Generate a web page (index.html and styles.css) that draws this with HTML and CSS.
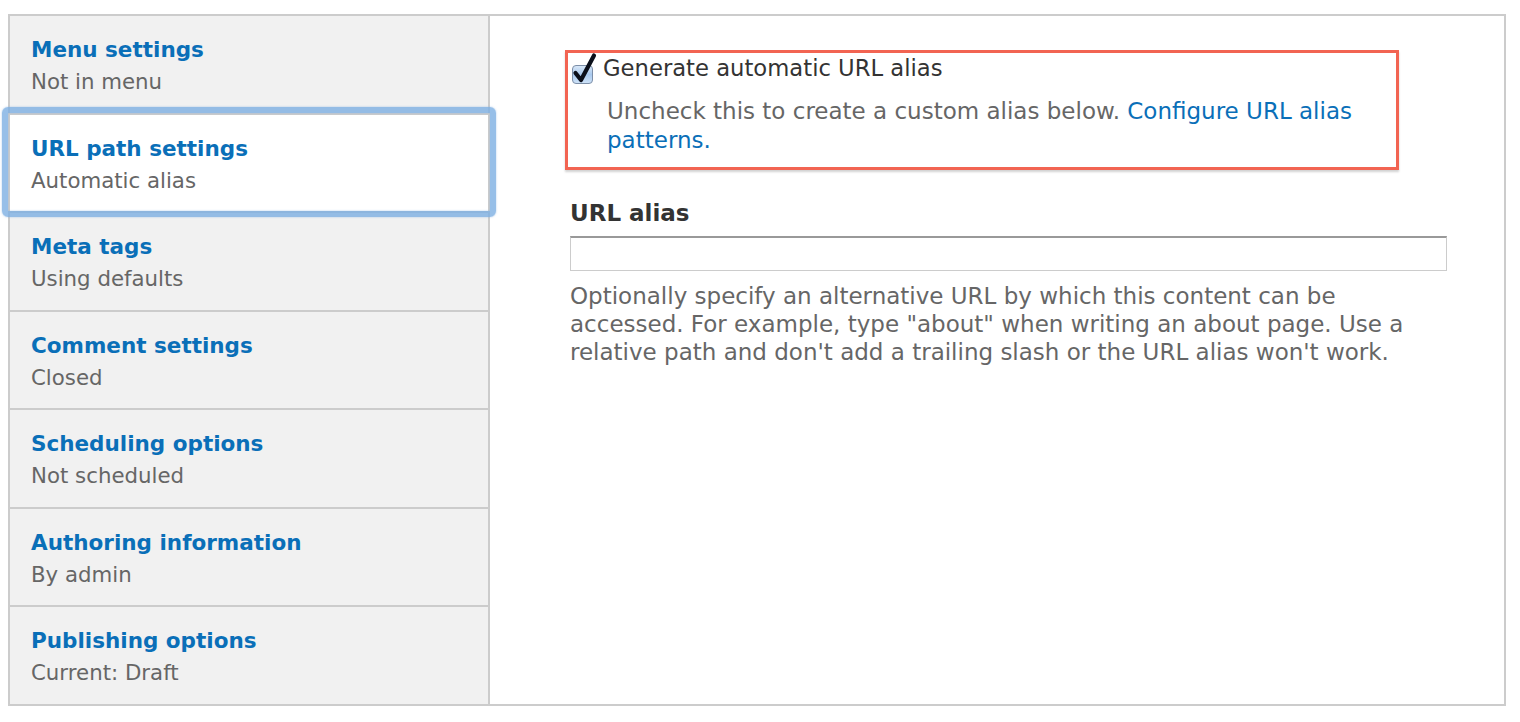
FILE: index.html
```html
<!DOCTYPE html>
<html>
<head>
<meta charset="utf-8">
<link rel="stylesheet" href="styles.css">
</head>
<body>
<div class="page">
  <div class="vtabs">
    <ul class="menu">
      <li class="tab"><a class="tab-title" href="#">Menu settings</a><span class="tab-summary">Not in menu</span></li>
      <li class="tab selected"><a class="tab-title" href="#">URL path settings</a><span class="tab-summary">Automatic alias</span></li>
      <li class="tab"><a class="tab-title" href="#">Meta tags</a><span class="tab-summary">Using defaults</span></li>
      <li class="tab"><a class="tab-title" href="#">Comment settings</a><span class="tab-summary">Closed</span></li>
      <li class="tab"><a class="tab-title" href="#">Scheduling options</a><span class="tab-summary">Not scheduled</span></li>
      <li class="tab"><a class="tab-title" href="#">Authoring information</a><span class="tab-summary">By admin</span></li>
      <li class="tab last"><a class="tab-title" href="#">Publishing options</a><span class="tab-summary">Current: Draft</span></li>
    </ul>
    <div class="pane">
      <div class="highlight">
        <label class="check-row">
          <svg class="checkbox" width="28" height="32" viewBox="0 0 28 32">
            <defs>
              <linearGradient id="cb" x1="0" y1="0" x2="0" y2="1">
                <stop offset="0" stop-color="#dbe9f8"/>
                <stop offset="0.5" stop-color="#a9c9ee"/>
                <stop offset="1" stop-color="#cfe3f8"/>
              </linearGradient>
            </defs>
            <rect x="2.5" y="13.5" width="20" height="18" rx="3.5" fill="url(#cb)" stroke="#7d8fa8"/>
            <path d="M5.5 21 L11 28 L24 3.5" fill="none" stroke="#0b0f1a" stroke-width="4.2" stroke-linecap="round" stroke-linejoin="round"/>
          </svg>
          <span class="check-label">Generate automatic URL alias</span>
        </label>
        <p class="check-desc">Uncheck this to create a custom alias below. <a href="#">Configure URL alias patterns.</a></p>
      </div>
      <label class="field-label" for="alias">URL alias</label>
      <input class="text-input" id="alias" type="text">
      <p class="field-desc">Optionally specify an alternative URL by which this content can be accessed. For example, type "about" when writing an about page. Use a relative path and don't add a trailing slash or the URL alias won't work.</p>
    </div>
  </div>
</div>
</body>
</html>
```
FILE: styles.css
```css
* { box-sizing: border-box; }
html, body { margin: 0; padding: 0; background: #fff; }
body {
  font-family: "DejaVu Sans", "Liberation Sans", sans-serif;
  color: #333;
}
a { color: #0a6fb8; text-decoration: none; }
.page {
  padding: 14px 14px 16px 8px;
}
.vtabs {
  display: flex;
  height: 692px;
  border: 2px solid #cccccc;
}
.menu {
  list-style: none;
  margin: 0;
  padding: 0;
  width: 480px;
  flex: none;
  background: #f1f1f1;
  border-right: 2px solid #cccccc;
  display: flex;
  flex-direction: column;
}
.tab {
  flex: 1 1 0;
  padding: 18px 0 0 21px;
  border-bottom: 2px solid #cccccc;
  display: flex;
  flex-direction: column;
}
.tab.last {
  border-bottom: none;
  flex: 1 1 0;
}
.tab.selected {
  background: #fff;
  position: relative;
  z-index: 1;
}
.tab.selected::after {
  content: "";
  position: absolute;
  left: -8px;
  right: -8px;
  top: -8px;
  bottom: -6px;
  border: 6px solid rgba(125, 175, 226, 0.8);
  border-radius: 6px;
  box-shadow: 0 0 2px rgba(125, 175, 226, 0.7), inset 0 0 2px rgba(125, 175, 226, 0.7);
  pointer-events: none;
}
.tab-title {
  font-weight: bold;
  font-size: 21.5px;
  line-height: 32px;
  color: #0a6fb8;
}
.tab-summary {
  font-size: 21.3px;
  line-height: 32px;
  color: #666;
}
.pane {
  flex: 1;
  padding: 34px 57px 0 80px;
  font-size: 23px;
}
.highlight {
  width: 834px;
  margin-left: -5px;
  border: 3px solid #f26452;
  box-shadow: 0 2px 2px rgba(0, 0, 0, 0.18);
  padding: 1px 10px 12px 2px;
}
.check-row {
  display: flex;
  align-items: flex-start;
  height: 28px;
}
.checkbox {
  flex: none;
  margin-top: -2px;
}
.check-label {
  margin-left: 5px;
  font-size: 22.7px;
  line-height: 28px;
  color: #333;
}
.check-desc {
  margin: 15px 0 0 37px;
  line-height: 29px;
  color: #666;
}
.field-label {
  display: block;
  margin-top: 29px;
  font-weight: bold;
  line-height: 28px;
  color: #333;
}
.text-input {
  display: block;
  width: 100%;
  height: 35px;
  margin-top: 9px;
  border: 1px solid #cccccc;
  border-top-color: #999999;
  border-top-width: 2px;
  background: #fff;
  padding: 0;
}
.field-desc {
  margin: 11px 0 0 0;
  line-height: 28px;
  color: #666;
}
```
